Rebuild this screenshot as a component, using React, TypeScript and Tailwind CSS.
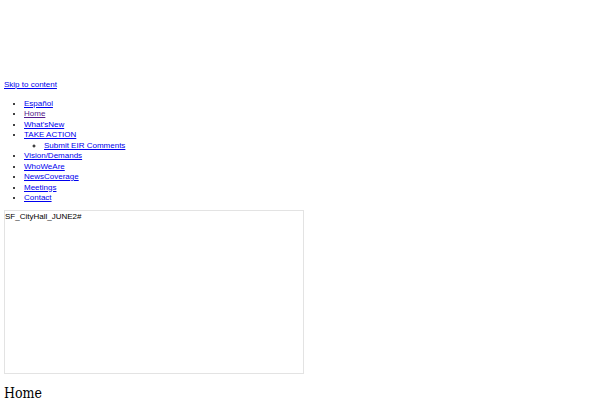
const navItems = [
  { label: "Español" },
  { label: "Home", visited: true },
  { label: "What'sNew" },
  { label: "TAKE ACTION", children: ["Submit EIR Comments"] },
  { label: "Vision/Demands" },
  { label: "WhoWeAre" },
  { label: "NewsCoverage" },
  { label: "Meetings" },
  { label: "Contact" },
]

export default function App() {
  return (
    <div className="min-h-[400px] bg-white pt-[80px] px-1 font-['Liberation_Sans',Arial,sans-serif] text-[8px] leading-[10.5px] text-black">
      <a href="#content" className="text-[#0000ee] underline">
        Skip to content
      </a>
      <ul className="list-disc pl-5 mt-[8px] mb-[2px]">
        {navItems.map(({ label, visited, children }) => (
          <li key={label}>
            <a
              href="#"
              className={visited ? "text-[#551a8b] underline" : "text-[#0000ee] underline"}
            >
              {label}
            </a>
            {children && (
              <ul className="list-[circle] pl-5">
                {children.map((c) => (
                  <li key={c}>
                    <a href="#" className="text-[#0000ee] underline">
                      {c}
                    </a>
                  </li>
                ))}
              </ul>
            )}
          </li>
        ))}
      </ul>
      <div className="w-[300px] h-[164px] border border-[#e3e3e3] mt-[6px]">
        <span className="block pt-[1px]">SF_CityHall_JUNE2#</span>
      </div>
      <h1 className="mt-[10px] font-['DejaVu_Serif_Condensed','DejaVu_Serif',serif] text-[14px] leading-[18px]">
        Home
      </h1>
    </div>
  )
}
